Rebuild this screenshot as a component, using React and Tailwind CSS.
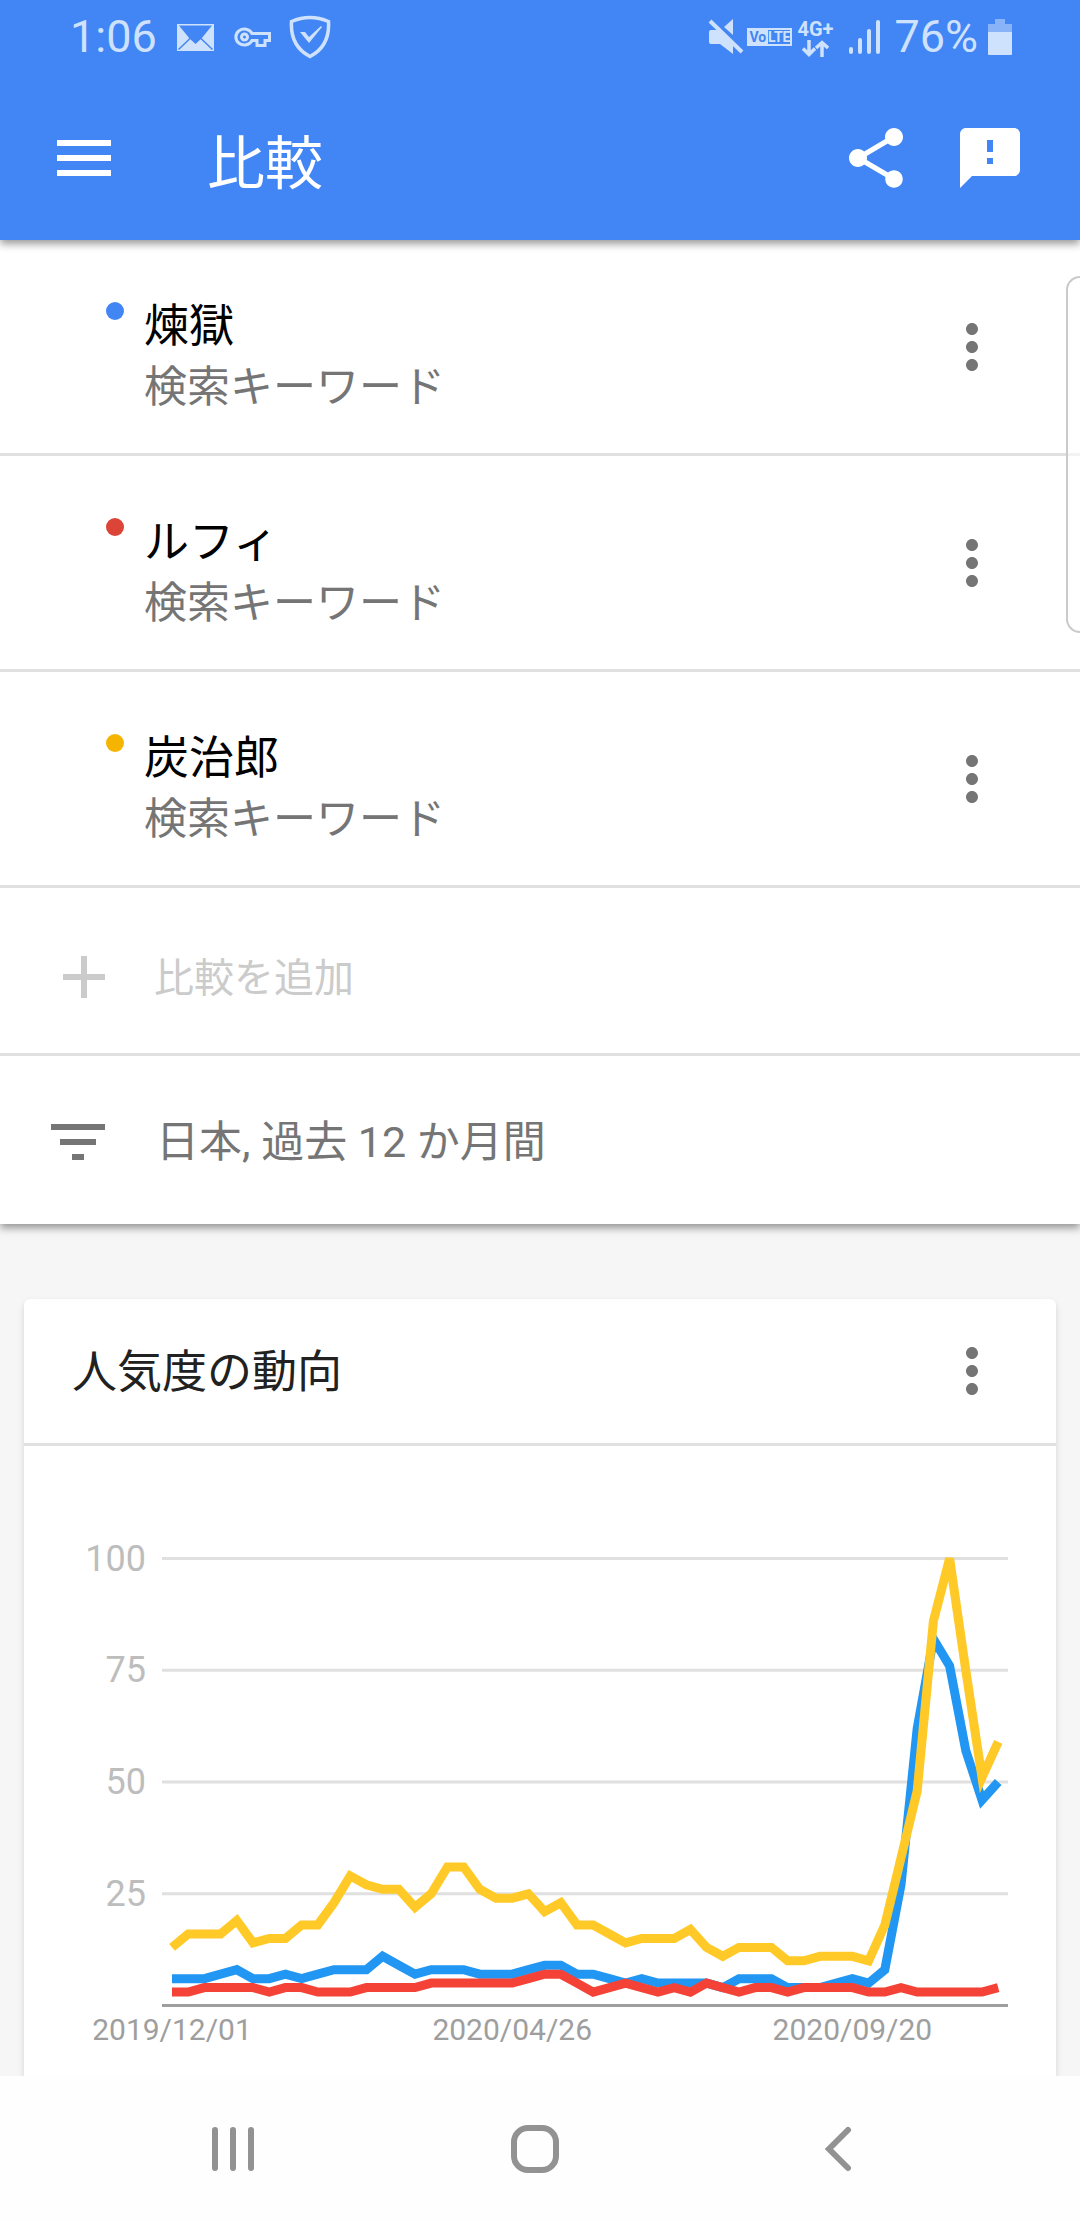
import React from "react";
import { MdMenu, MdShare, MdFeedback, MdMoreVert, MdAdd, MdFilterList } from "react-icons/md";

const TERMS = [
  { name: "煉獄", dot: "bg-[#4285f4]" },
  { name: "ルフィ", dot: "bg-[#db4437]" },
  { name: "炭治郎", dot: "bg-[#f4b400]" },
];

const SERIES = [
  {
    color: "#2196f3",
    values: [6, 6, 6, 7, 8, 6, 6, 7, 6, 7, 8, 8, 8, 11, 9, 7, 8, 8, 8, 7, 7, 7, 8, 9, 9, 7, 7, 6, 5, 6, 5, 5, 5, 5, 4, 6, 6, 6, 4, 4, 4, 5, 6, 5, 8, 27, 62, 82, 76, 57, 46, 50],
  },
  {
    color: "#f44336",
    values: [3, 3, 4, 4, 4, 4, 3, 4, 4, 3, 3, 3, 4, 4, 4, 4, 5, 5, 5, 5, 5, 5, 6, 7, 7, 5, 3, 4, 5, 4, 3, 4, 3, 5, 4, 3, 4, 4, 3, 4, 4, 4, 4, 3, 3, 4, 3, 3, 3, 3, 3, 4],
  },
  {
    color: "#ffca28",
    values: [13, 16, 16, 16, 19, 14, 15, 15, 18, 18, 23, 29, 27, 26, 26, 22, 25, 31, 31, 26, 24, 24, 25, 21, 23, 18, 18, 16, 14, 15, 15, 15, 17, 13, 11, 13, 13, 13, 10, 10, 11, 11, 11, 10, 18, 33, 48, 86, 100, 75, 51, 59],
  },
];

const CHART = { left: 148, step: 16.2, top: 112.5, bottom: 559.5 };
const xAt = (i) => CHART.left + i * CHART.step;
const yAt = (v) => CHART.bottom - ((CHART.bottom - CHART.top) * v) / 100;
const pointsOf = (values) => values.map((v, i) => `${xAt(i).toFixed(1)},${yAt(v).toFixed(1)}`).join(" ");

function StatusBar() {
  return (
    <div className="flex h-[76px] items-start justify-between pl-[70px] pr-[68px] pt-[13px] text-[#cfe2fd]">
      <div className="flex h-12 items-center">
        <span className="w-[107px] text-[45px] leading-[48px]">1:06</span>
        <svg className="h-[27px] w-[37px]" viewBox="0 0 37 27" fill="currentColor" aria-label="メール">
          <path d="M0 0h37v27H0z" />
          <path d="M2 1.500H35L24.500 14.500L18.500 20L12.500 14.500Z" fill="#4285f4" />
          <path d="M1.500 25.500L13 14.500M35.500 25.500L24 14.500" fill="none" stroke="#4285f4" strokeWidth="1.500" />
        </svg>
        <svg className="ml-[20px] h-[24px] w-[38px]" viewBox="0 0 38 24" fill="none" stroke="currentColor" strokeWidth="3" aria-label="VPN">
          <path d="M18 8.500A8.500 8 0 1 0 18 15.500H23V20.500H31V15.500H35.500V8.500Z" />
          <circle cx="10.500" cy="12" r="3" />
        </svg>
        <svg className="ml-[17px] h-[44px] w-[42px]" viewBox="0 0 42 44" fill="none" stroke="currentColor" aria-label="保護">
          <path d="M2.500 6.500Q21 -1.500 39.500 6.500Q41 31 21 41.500Q1 31 2.500 6.500Z" strokeWidth="3.500" />
          <path d="M11 17L16 17L20 22L32 11L33 12L20 28Z" fill="currentColor" stroke="none" />
        </svg>
      </div>
      <div className="flex h-12 items-center">
        <svg className="h-[38px] w-[36px]" viewBox="0 0 36 38" fill="currentColor" aria-label="ミュート">
          <path d="M3 12H10L25 27V36L12 26H3Q1 26 1 24V14Q1 12 3 12Z" />
          <path d="M25 1V17L16 9Z" />
          <path d="M2 3L34 34" fill="none" stroke="currentColor" strokeWidth="4" />
        </svg>
        <span className="ml-[3px] flex h-[18px] w-[45px] border-2 border-current text-[14px] font-bold leading-[14px]">
          <span className="flex-1 bg-[#cfe2fd] text-[#4285f4]">Vo</span>
          <span>LTE</span>
        </span>
        <span className="ml-[5px] flex w-[36px] flex-col items-center pt-[2px]">
          <span className="text-[20px] font-bold leading-[18px]">4G+</span>
          <svg className="mt-[2px] h-[17px] w-[27px]" viewBox="0 0 27 17" fill="none" stroke="currentColor" strokeWidth="3.500" aria-hidden="true">
            <path d="M7 0V14M1 8.500L7 14.500L13 8.500M20 17V3M14 8L20 2.500L26 8" />
          </svg>
        </span>
        <svg className="ml-[15px] h-[36px] w-[32px]" viewBox="0 0 32 36" stroke="currentColor" strokeWidth="4" strokeLinecap="round" aria-label="電波">
          <path d="M3 30V33M12 21V33M21 12V33M30 3V33" />
        </svg>
        <span className="ml-[14px] text-[45px] leading-[48px]">76%</span>
        <svg className="ml-[10px] h-[36px] w-[24px]" viewBox="0 0 24 36" fill="currentColor" aria-label="バッテリー">
          <path d="M7 0H17V5H24V14H0V5H7Z" opacity=".5" />
          <path d="M0 13H24V35Q24 36 23 36H1Q0 36 0 35Z" />
        </svg>
      </div>
    </div>
  );
}

function TermRow({ name, dot }) {
  return (
    <li className="flex h-[216px] items-center border-b-3 border-[#e0e0e0] pl-[106px] pr-[72px]">
      <span className={`mb-[71px] size-[18px] shrink-0 rounded-full ${dot}`} />
      <div className="ml-[20px] flex-1 pt-5">
        <p className="text-[45px] leading-[61px] text-black">{name}</p>
        <p className="text-[43px] leading-[61px] text-[#757575]">検索キーワード</p>
      </div>
      <button type="button" aria-label={`${name}のメニュー`} className="text-[#757575]">
        <MdMoreVert className="size-[72px]" />
      </button>
    </li>
  );
}

function TrendChart() {
  return (
    <svg className="block h-auto w-full" viewBox="0 0 1032 630" role="img" aria-label="人気度の動向グラフ">
      {[100, 75, 50, 25].map((v) => (
        <g key={v}>
          <line x1="138" x2="984" y1={yAt(v)} y2={yAt(v)} stroke="#e0e0e0" strokeWidth="3" />
          <text x="122" y={yAt(v) + 12} textAnchor="end" fontSize="36" fill="#bdbdbd">{v}</text>
        </g>
      ))}
      <line x1="138" x2="984" y1="559.5" y2="559.5" stroke="#9e9e9e" strokeWidth="3" />
      {SERIES.map((s) => (
        <polyline key={s.color} points={pointsOf(s.values)} fill="none" stroke={s.color} strokeWidth="9" />
      ))}
      {[["2019/12/01", 0], ["2020/04/26", 21], ["2020/09/20", 42]].map(([label, i]) => (
        <text key={label} x={xAt(i)} y="594" textAnchor="middle" fontSize="30" fill="#9e9e9e">{label}</text>
      ))}
    </svg>
  );
}

export default function App() {
  return (
    <div lang="ja" className="relative flex min-h-screen flex-col overflow-hidden bg-[#f6f6f6] font-[Roboto,'Noto_Sans_CJK_JP',sans-serif]">
      <header className="relative z-10 bg-[#4285f4] text-white shadow-[0_4px_8px_rgba(0,0,0,0.4)]">
        <StatusBar />
        <div className="flex h-[164px] items-center pl-12 pr-[54px]">
          <button type="button" aria-label="メニュー"><MdMenu className="size-[72px]" /></button>
          <h1 className="ml-[87px] flex-1 pt-3 text-[58px] leading-[72px]">比較</h1>
          <button type="button" aria-label="共有"><MdShare className="size-[72px]" /></button>
          <button type="button" aria-label="フィードバック" className="ml-[42px]"><MdFeedback className="size-[72px]" /></button>
        </div>
      </header>

      <section className="relative bg-white shadow-[0_4px_8px_rgba(0,0,0,0.4)]">
        <ul>
          {TERMS.map((t) => <TermRow key={t.name} {...t} />)}
        </ul>
        <button type="button" className="flex h-[168px] w-full items-center border-b-3 border-[#e0e0e0] pl-12 pt-3 text-left text-[#cbcbcb]">
          <MdAdd className="size-[72px]" />
          <span className="ml-[34px] pt-1 text-[40px] leading-[60px]">比較を追加</span>
        </button>
        <button type="button" className="flex h-[168px] w-full items-center pl-[42px] pt-1 text-left text-[#757575]">
          <MdFilterList className="size-[72px]" />
          <span className="ml-[42px] text-[43px] leading-[60px]">日本, 過去 12 か月間</span>
        </button>
      </section>

      <main className="flex flex-1 flex-col px-6 pt-[75px]">
        <article className="flex-1 rounded-t-md bg-white shadow-[0_3px_6px_rgba(0,0,0,0.14)]">
          <div className="flex h-[147px] items-center justify-between border-b-3 border-[#e0e0e0] pl-12 pr-12">
            <h2 className="pt-1 text-[45px] leading-[60px] text-[#212121]">人気度の動向</h2>
            <button type="button" aria-label="グラフのメニュー" className="text-[#757575]">
              <MdMoreVert className="size-[72px]" />
            </button>
          </div>
          <TrendChart />
        </article>
      </main>

      <nav className="relative flex h-[144px] items-center justify-between bg-[#fefefe] px-[197px] text-[#929292]">
        <button type="button" aria-label="履歴">
          <svg className="size-[72px]" viewBox="0 0 72 72" stroke="currentColor" strokeWidth="6" strokeLinecap="round">
            <path d="M18 18V56M36 18V56M54 18V56" />
          </svg>
        </button>
        <button type="button" aria-label="ホーム">
          <svg className="size-[72px]" viewBox="0 0 72 72" fill="none" stroke="currentColor" strokeWidth="6">
            <rect x="10" y="16" width="42" height="42" rx="14" />
          </svg>
        </button>
        <button type="button" aria-label="戻る">
          <svg className="size-[72px]" viewBox="0 0 72 72" fill="none" stroke="currentColor" strokeWidth="6" strokeLinecap="round">
            <path d="M37 18L18 37L37 56" />
          </svg>
        </button>
      </nav>

      <div className="absolute right-0 top-[276px] z-20 h-[357px] w-[14px] rounded-l-[20px] border-2 border-r-0 border-[#cacaca] bg-white/60" />
    </div>
  );
}
